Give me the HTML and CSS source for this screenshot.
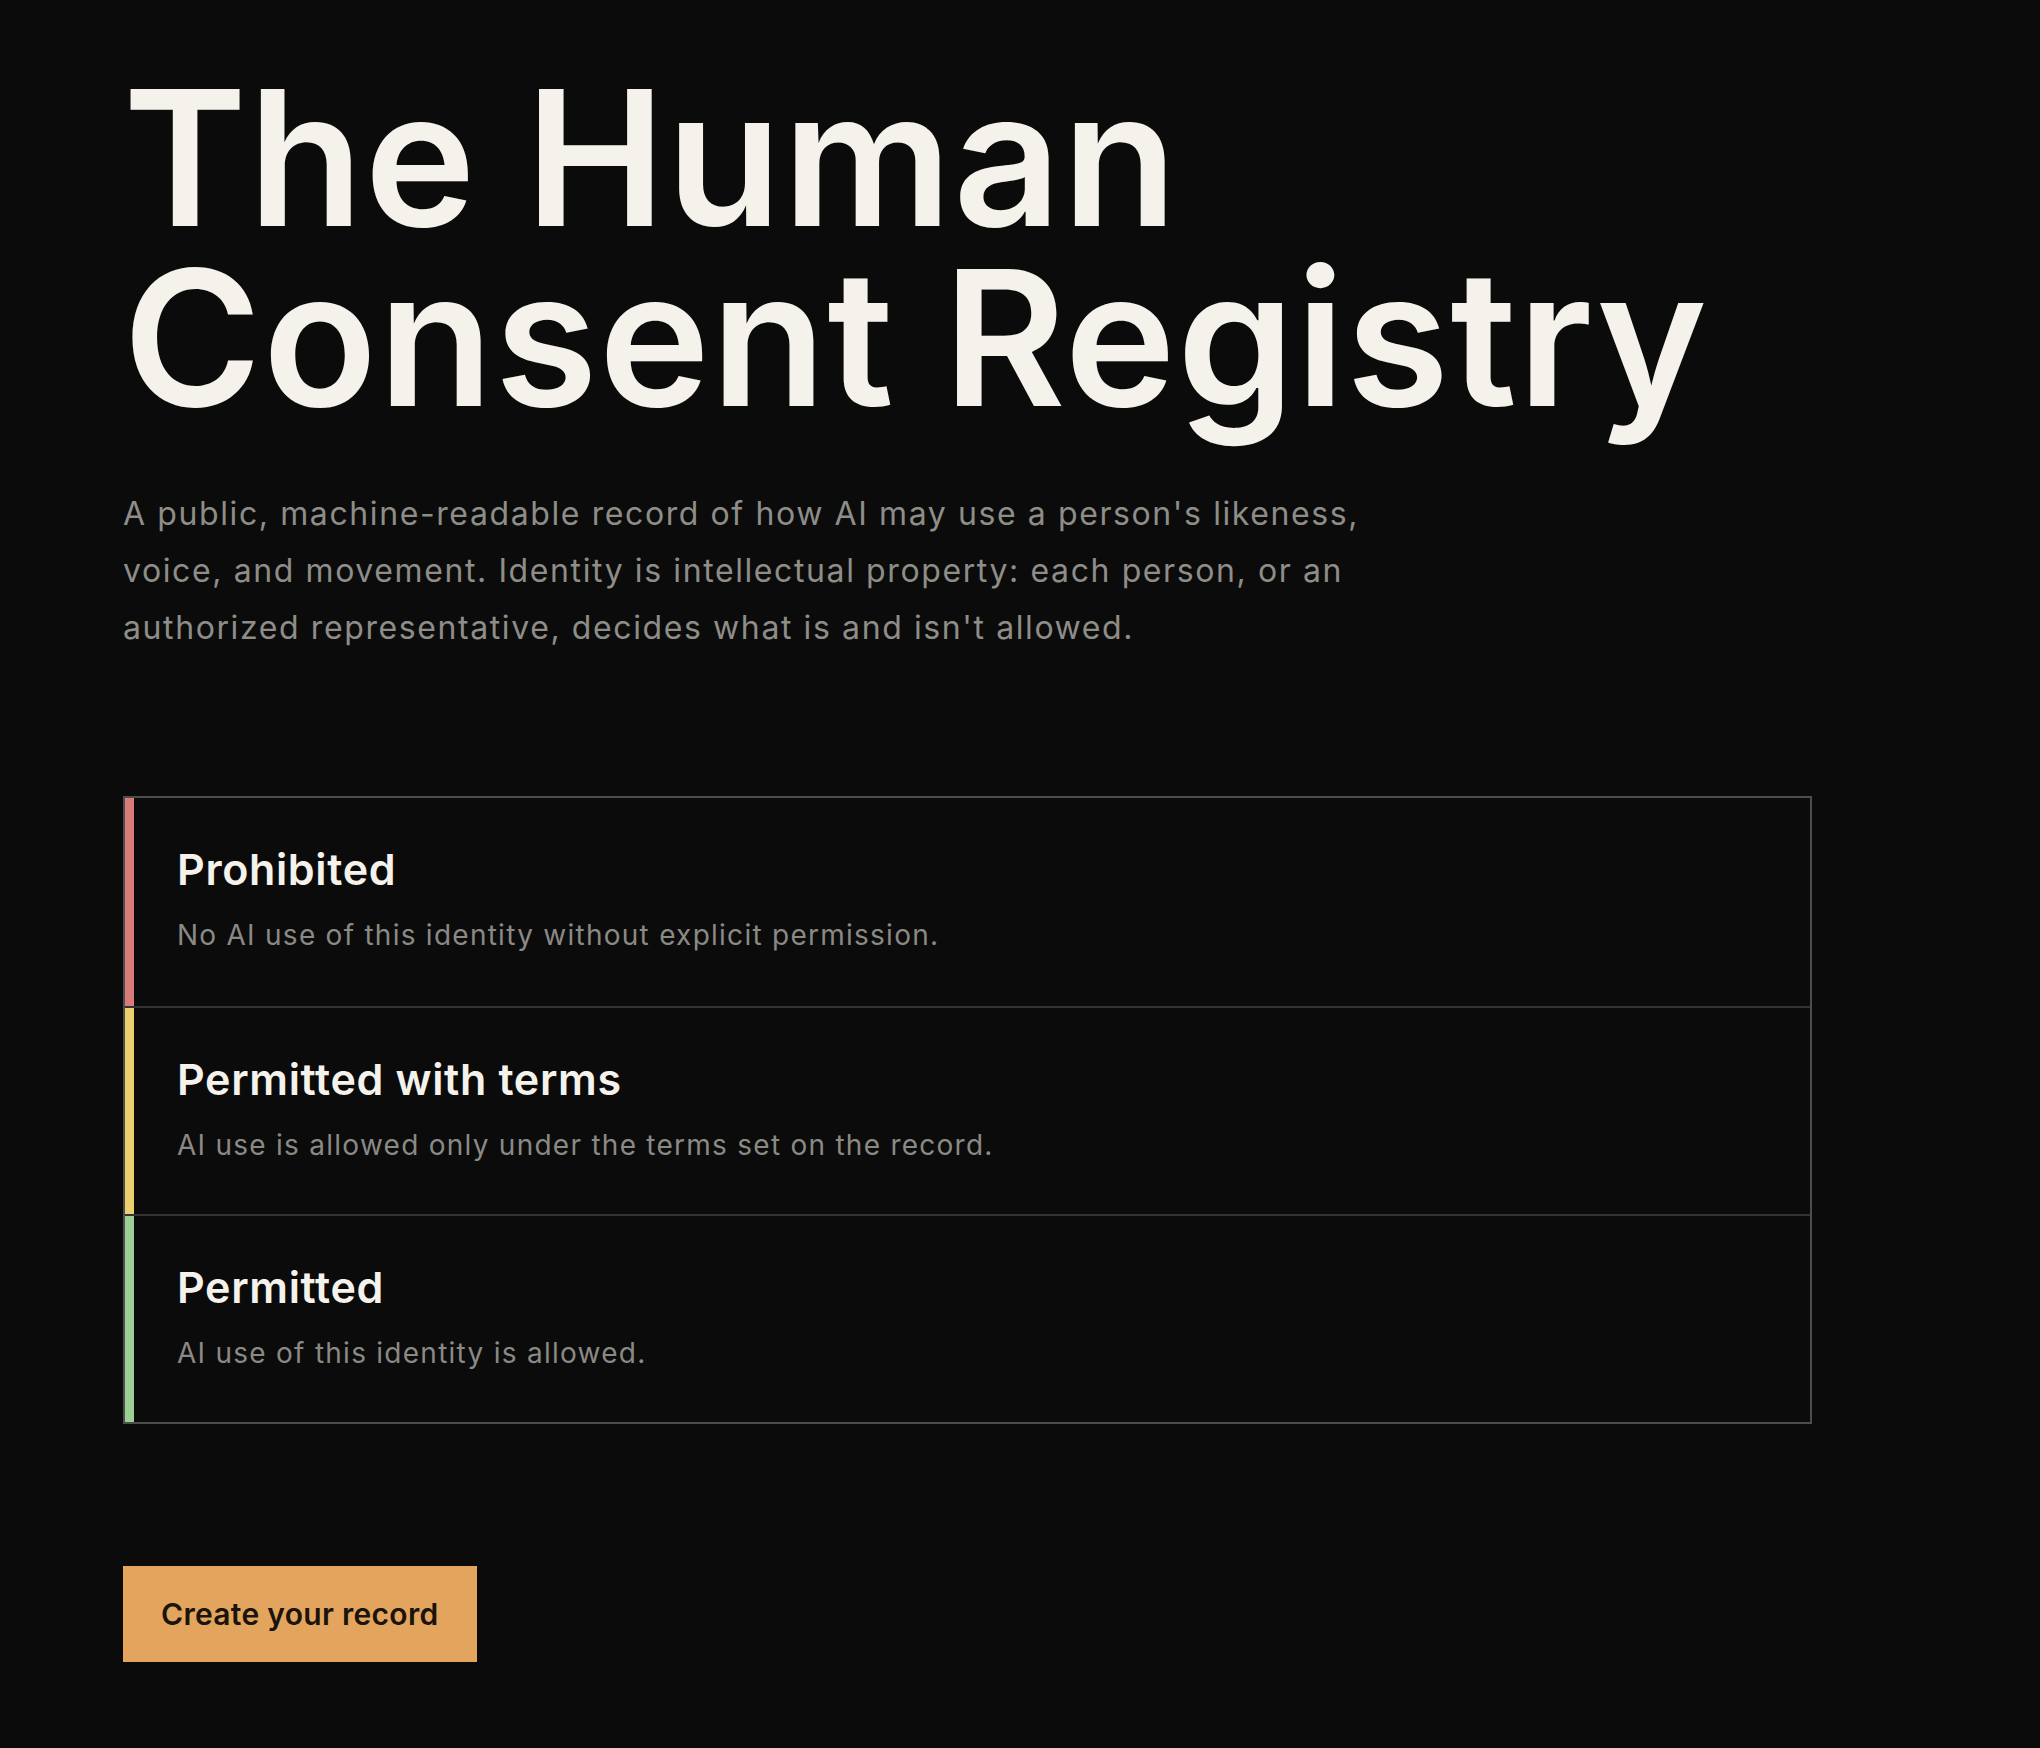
FILE: index.html
```html
<!DOCTYPE html>
<html lang="en">
<head>
<meta charset="utf-8">
<title>The Human Consent Registry</title>
<link rel="stylesheet" href="styles.css">
</head>
<body>
<main class="page">
  <h1 class="headline">The Human<br>Consent Registry</h1>
  <p class="lede">A public, machine-readable record of how AI may use a person's likeness, voice, and movement. Identity is intellectual property: each person, or an authorized representative, decides what is and isn't allowed.</p>

  <ul class="states">
    <li class="state">
      <span class="state-bar state-bar--red"></span>
      <div class="state-body">
        <h2 class="state-title">Prohibited</h2>
        <p class="state-text">No AI use of this identity without explicit permission.</p>
      </div>
    </li>
    <li class="state">
      <span class="state-bar state-bar--yellow"></span>
      <div class="state-body">
        <h2 class="state-title">Permitted with terms</h2>
        <p class="state-text">AI use is allowed only under the terms set on the record.</p>
      </div>
    </li>
    <li class="state">
      <span class="state-bar state-bar--green"></span>
      <div class="state-body">
        <h2 class="state-title">Permitted</h2>
        <p class="state-text">AI use of this identity is allowed.</p>
      </div>
    </li>
  </ul>

  <a class="cta" href="#">Create your record</a>
</main>
</body>
</html>
```

FILE: styles.css
```css
* {
  box-sizing: border-box;
}

html, body {
  margin: 0;
  padding: 0;
  background: #0b0b0b;
}

body {
  font-family: Inter, "Liberation Sans", sans-serif;
  color: #f4f2eb;
}

.page {
  padding: 68px 0 80px 123px;
  display: flex;
  flex-direction: column;
  align-items: flex-start;
}

.headline {
  margin: 0;
  font-family: Inter, "Liberation Sans", sans-serif;
  font-weight: 600;
  font-size: 188px;
  line-height: 180px;
  letter-spacing: 0.006em;
  color: #f4f2eb;
}

.lede {
  margin: 57px 0 0;
  max-width: 1290px;
  font-size: 32px;
  line-height: 57px;
  letter-spacing: 0.05em;
  color: #8e8d88;
}

.states {
  list-style: none;
  margin: 140px 0 0;
  padding: 0;
  width: 1689px;
  border: 2px solid #4d4d4d;
}

.state {
  display: flex;
  min-height: 208px;
}

.state + .state {
  border-top: 2px solid #333;
}

.state-bar {
  flex: 0 0 9px;
}

.state-bar--red { background: #d97c79; }
.state-bar--yellow { background: #ecd070; }
.state-bar--green { background: #9ccf94; }

.state-body {
  padding: 46px 43px 44px;
}

.state-title {
  margin: 0;
  font-size: 43px;
  line-height: 50px;
  font-weight: 600;
  letter-spacing: 0.015em;
  color: #f4f2eb;
}

.state-text {
  margin: 22px 0 0;
  font-size: 28px;
  line-height: 39px;
  letter-spacing: 0.045em;
  color: #8a8984;
}

.cta {
  margin-top: 142px;
  display: inline-block;
  height: 96px;
  line-height: 96px;
  padding: 0 38px;
  background: #e3a55e;
  color: #1a140c;
  font-size: 30px;
  font-weight: 600;
  letter-spacing: 0.01em;
  text-decoration: none;
}
```
